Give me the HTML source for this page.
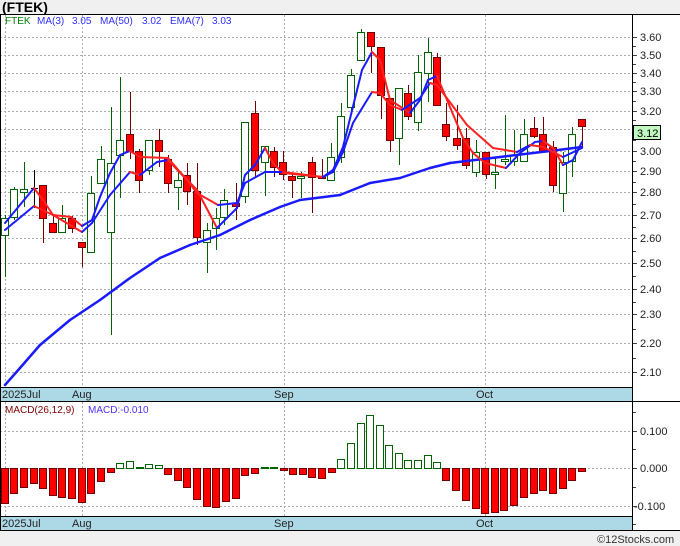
<!DOCTYPE html>
<html><head><meta charset="utf-8"><style>
body{margin:0;width:680px;height:546px;background:#f0f0f0;overflow:hidden;font-family:"Liberation Sans","DejaVu Sans",sans-serif}
svg{position:absolute;left:0;top:0}
</style></head><body>
<svg id="s" width="680" height="546" xmlns="http://www.w3.org/2000/svg" font-family="Liberation Sans, DejaVu Sans, sans-serif">
<rect x="0" y="14" width="680" height="516" fill="#fff"/>
<text x="2" y="12" font-size="14" font-weight="bold" fill="#000">(FTEK)</text>
<g id="grid"></g>
<g id="macd"></g>
<g id="cand"></g>
<g id="lines"></g>
<rect x="0" y="387" width="632" height="14" fill="#add8e6"/>
<rect x="0" y="516" width="632" height="14" fill="#add8e6"/>
<line x1="0" y1="14.5" x2="680" y2="14.5" stroke="#000"/>
<line x1="0" y1="387.5" x2="632" y2="387.5" stroke="#000"/>
<line x1="0" y1="401.5" x2="680" y2="401.5" stroke="#000"/>
<line x1="0" y1="516.5" x2="632" y2="516.5" stroke="#000"/>
<line x1="0" y1="530.5" x2="680" y2="530.5" stroke="#000"/>
<line x1="0.5" y1="14" x2="0.5" y2="530" stroke="#000"/>
<line x1="632.5" y1="14" x2="632.5" y2="530" stroke="#000"/>
<g font-size="11" fill="#222">
<text x="2" y="398">2025Jul</text><text x="72" y="398">Aug</text><text x="274" y="398">Sep</text><text x="476" y="398">Oct</text>
<text x="2" y="527">2025Jul</text><text x="72" y="527">Aug</text><text x="274" y="527">Sep</text><text x="476" y="527">Oct</text>
</g>
<g font-size="10">
<text x="5" y="24" fill="#008000">FTEK</text>
<text x="37" y="24" fill="#3030ff">MA(3)</text><text x="72" y="24" fill="#3030ff">3.05</text>
<text x="100" y="24" fill="#3030ff">MA(50)</text><text x="142" y="24" fill="#3030ff">3.02</text>
<text x="170" y="24" fill="#3030ff">EMA(7)</text><text x="212" y="24" fill="#3030ff">3.03</text>
<text x="5" y="413" fill="#800000">MACD(26,12,9)</text>
<text x="88" y="413" fill="#5030ff">MACD:-0.010</text>
</g>
<g id="ax" font-size="11" fill="#222"></g>
<rect x="633.5" y="125.5" width="27" height="14" fill="#c0f8c0" stroke="#000"/>
<text x="637" y="137" font-size="11" fill="#000">3.12</text>
<text x="597" y="543" font-size="11" fill="#333">©12Stocks.com</text>
</svg>
<script>
const NS="http://www.w3.org/2000/svg";
function el(p,t,a){const e=document.createElementNS(NS,t);for(const k in a)e.setAttribute(k,a[k]);document.getElementById(p).appendChild(e);return e;}
const G=[[37,'3.60'],[55,'3.50'],[73,'3.40'],[91,'3.30'],[111,'3.20'],[129,'3.10'],[151,'3.00'],[171,'2.90'],[192,'2.80'],[215,'2.70'],[238,'2.60'],[263,'2.50'],[289,'2.40'],[314,'2.30'],[343,'2.20'],[372,'2.10']];
G.forEach(([y,l],i)=>{const yy=y+.5;el('grid','line',{x1:0,y1:yy,x2:632,y2:yy,stroke:'#aaa','stroke-dasharray':'2,2'});
 el('grid','line',{x1:632,y1:yy,x2:637,y2:yy,stroke:'#444'});
 const t=el('ax','text',{x:640,y:y+4});t.textContent=l;
 if(i<G.length-1){const y2=Math.round((y+G[i+1][0])/2)+.5;el('grid','line',{x1:632,y1:y2,x2:636,y2:y2,stroke:'#444'});}});
[5,82,284,485].forEach(x=>{el('grid','line',{x1:x+.5,y1:15,x2:x+.5,y2:387,stroke:'#aaa','stroke-dasharray':'2,2'});el('grid','line',{x1:x+.5,y1:402,x2:x+.5,y2:516,stroke:'#aaa','stroke-dasharray':'2,2'});});
[[431,'0.100'],[468,'0.000'],[506,'-0.100']].forEach(([y,l])=>{el('grid','line',{x1:0,y1:y+.5,x2:632,y2:y+.5,stroke:'#aaa','stroke-dasharray':'2,2'});el('grid','line',{x1:632,y1:y+.5,x2:637,y2:y+.5,stroke:'#444'});const t=el('ax','text',{x:l[0]=='-'?634:640,y:y+4});t.textContent=l;});
[412,449,487,524].forEach(y=>el('grid','line',{x1:632,y1:y+.5,x2:636,y2:y+.5,stroke:'#444'}));
const C=[[5,218,235,215,277,'g'],[14,189,217,187,220,'g'],[24,189,192,162,207,'g'],[34,188,189,170,208,'k'],[43,185,218,185,243,'r'],[53,223,232,215,232,'r'],[62,218,232,205,232,'g'],[72,218,228,216,233,'r'],[82,242,247,242,267,'r'],[91,193,252,176,252,'g'],[101,159,183,146,183,'g'],[111,163,232,107,335,'g'],[120,140,155,77,198,'g'],[130,134,151,92,159,'r'],[139,151,180,149,193,'r'],[149,140,170,140,175,'g'],[159,140,151,129,167,'r'],[168,159,183,155,193,'r'],[178,180,187,170,210,'g'],[187,175,191,163,205,'r'],[197,191,237,163,245,'r'],[207,230,242,223,273,'g'],[216,218,228,208,250,'g'],[224,200,217,189,225,'g'],[236,203,206,183,220,'r'],[245,122,196,122,203,'g'],[255,113,170,101,177,'r'],[265,146,162,146,196,'g'],[274,151,167,147,177,'r'],[283,162,174,151,180,'r'],[292,176,180,174,198,'r'],[301,176,178,172,198,'g'],[312,162,177,157,213,'r'],[322,176,178,159,178,'r'],[331,157,180,143,180,'g'],[341,116,157,103,163,'g'],[351,75,107,69,111,'g'],[361,32,60,29,60,'g'],[371,32,46,32,73,'r'],[381,47,95,47,119,'r'],[390,98,140,98,152,'r'],[399,88,138,88,165,'g'],[408,93,116,85,120,'r'],[418,72,122,55,131,'g'],[428,52,73,38,102,'g'],[437,57,105,53,105,'r'],[446,124,136,103,141,'r'],[457,138,145,105,150,'r'],[466,138,165,128,169,'r'],[476,152,172,140,177,'g'],[486,152,174,152,179,'r'],[495,172,174,158,189,'g'],[505,159,161,115,165,'g'],[514,155,161,130,166,'g'],[524,134,161,119,161,'g'],[534,128,136,117,138,'r'],[543,134,151,117,151,'r'],[553,147,185,141,192,'r'],[563,162,193,152,212,'g'],[572,134,161,127,177,'g'],[582,119,126,119,148,'r']];
C.forEach(([x,bt,bb,wt,wb,c])=>{const wc=c=='g'?'#006400':c=='r'?'#700000':'#000';
 el('cand','line',{x1:x+.5,y1:wt,x2:x+.5,y2:wb,stroke:wc});
 if(c=='k'){el('cand','line',{x1:x-3,y1:bt+.5,x2:x+4,y2:bt+.5,stroke:'#000'});return;}
 el('cand','rect',{x:x-3.5,y:bt+.5,width:7,height:Math.max(1,bb-bt),fill:c=='g'?'#fff':'#f00',stroke:wc});});
const M=[[5,503],[14,493],[24,487],[34,483],[43,488],[53,495],[62,497],[72,498],[82,502],[91,493],[101,481],[111,472],[120,463],[130,461],[140,467],[149,464],[159,465],[168,474],[178,480],[187,487],[197,499],[207,506],[216,507],[226,501],[236,498],[245,475],[255,473],[265,467],[274,467],[284,470],[293,474],[303,474],[312,477],[322,478],[332,472],[341,459],[351,443],[361,423],[370,415],[380,425],[389,445],[399,453],[408,460],[418,460],[428,455],[437,462],[446,480],[456,490],[466,500],[476,508],[485,513],[495,512],[504,510],[514,505],[524,497],[534,493],[543,490],[553,493],[563,488],[572,480],[582,471]];
M.forEach(([x,y])=>{if(y>=468){el('macd','rect',{x:x-3.5,y:468.5,width:7,height:Math.max(1,y-468),fill:'#f00',stroke:'#700000'});}
 else{el('macd','rect',{x:x-3.5,y:y+.5,width:7,height:Math.max(1,468-y),fill:'#fff',stroke:'#006400'});}});
function pl(pts,w,fixed){for(let i=1;i<pts.length;i++){const a=pts[i-1],b=pts[i];const c=fixed||(b[1]<=a[1]?'#1a1aff':'#ff2020');
 el('lines','line',{x1:a[0],y1:a[1],x2:b[0],y2:b[1],stroke:c,'stroke-width':w,'stroke-linecap':'round'});}}
pl([[5,385],[20,368],[40,345],[70,320],[100,300],[130,278],[160,258],[190,245],[220,235],[250,220],[280,207],[300,200],[340,195],[370,183],[400,178],[430,168],[450,163],[500,157],[550,151],[582,147]],2.5,'#1a1aff');
pl([[5,223],[34,188],[43,200],[53,215],[71,217],[82,226],[92,220],[100,197],[110,173],[120,155],[130,151],[140,157],[168,158],[180,172],[197,190],[217,228],[237,208],[245,175],[255,165],[265,148],[273,163],[283,173],[323,177],[333,170],[343,147],[362,70],[372,52],[380,60],[390,100],[410,113],[420,100],[428,80],[437,76],[447,100],[463,138],[473,153],[485,163],[506,168],[520,153],[535,142],[543,141],[553,148],[563,165],[573,160],[582,142]],2);
pl([[5,230],[34,206],[53,215],[82,232],[92,223],[110,195],[130,172],[140,175],[157,162],[168,160],[187,180],[197,193],[218,205],[237,203],[245,183],[265,172],[273,172],[283,172],[323,177],[333,172],[343,152],[353,123],[372,92],[380,93],[390,105],[402,110],[420,98],[430,83],[437,85],[467,125],[493,148],[517,152],[530,145],[543,147],[563,157],[582,148]],2);
</script>
</body></html>
